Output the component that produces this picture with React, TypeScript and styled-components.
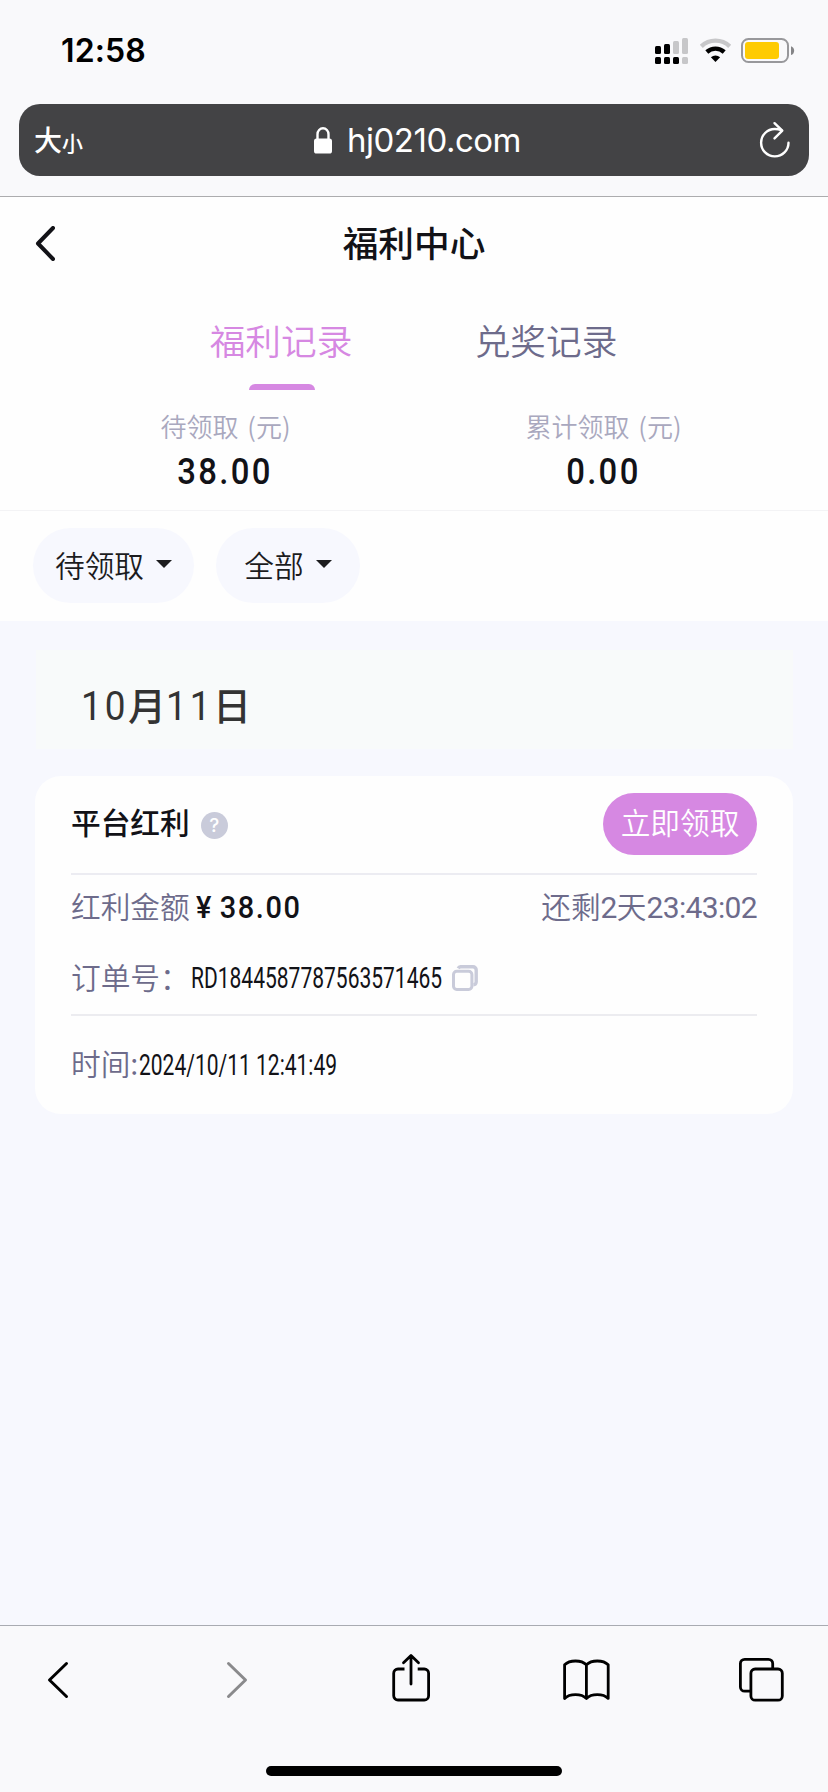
import React from "react";
import styled, { createGlobalStyle } from "styled-components";

const GlobalStyle = createGlobalStyle`
  * { box-sizing: border-box; }
  html, body { margin: 0; padding: 0; background: #f7f8fe; }
  body { font-family: Inter, "Noto Sans CJK SC", sans-serif; }
  button { border: 0; padding: 0; background: none; font: inherit; color: inherit; }
  svg { display: block; flex: none; }
`;

const Screen = styled.div`
  width: 828px;
  height: 1792px;
  display: flex;
  flex-direction: column;
  overflow: hidden;
  background: #f7f8fe;
`;

const BrowserTop = styled.header`
  height: 197px;
  flex: none;
  background: #f9f9fb;
  border-bottom: 1px solid #acacae;
`;

const StatusBar = styled.div`
  height: 104px;
  padding: 0 33px 3px 61px;
  display: flex;
  align-items: center;
  justify-content: space-between;
`;

const Clock = styled.span`
  font-size: 32px;
  font-weight: 600;
  line-height: 40px;
  letter-spacing: 0.1px;
  color: #000;
`;

const AddressBar = styled.div`
  height: 72px;
  margin: 0 19px;
  padding: 0 19px 0 15px;
  display: grid;
  grid-template-columns: 60px 1fr 60px;
  align-items: center;
  border-radius: 21px;
  background: #434345;
  color: #fff;
`;

const TextSize = styled.div`
  display: flex;
  align-items: baseline;
  padding-top: 1px;
  font-family: "Noto Sans CJK SC", sans-serif;
  font-weight: 500;
  font-size: 28px;
  line-height: 40px;
  small { font-size: 21px; }
`;

const Host = styled.div`
  display: flex;
  align-items: center;
  justify-content: center;
  gap: 15px;
  padding-left: 11px;
  font-size: 33px;
  line-height: 40px;
  letter-spacing: -0.5px;
`;

const ReloadSlot = styled.div`
  display: flex;
  justify-content: flex-end;
`;

const Panel = styled.section`
  flex: none;
  height: 424px;
  background: #fefefe;
`;

const NavBar = styled.div`
  height: 93px;
  padding: 0 35px;
  display: grid;
  grid-template-columns: 60px 1fr 60px;
  align-items: center;
`;

const Title = styled.h1`
  margin: 0;
  padding-bottom: 4px;
  text-align: center;
  font-family: "Noto Sans CJK SC", sans-serif;
  font-weight: 500;
  font-size: 35.7px;
  line-height: 52px;
  color: #121217;
`;

const Tabs = styled.nav`
  height: 100px;
  display: flex;
  gap: 121px;
  padding-left: 209px;
`;

const Tab = styled.button<{ $active?: boolean }>`
  width: 144px;
  height: 100px;
  padding-top: 24px;
  display: flex;
  flex-direction: column;
  align-items: center;
  justify-content: space-between;
  font-family: "Noto Sans CJK SC", sans-serif;
  font-size: 35.7px;
  font-weight: 350;
  line-height: 52px;
  color: ${(p) => (p.$active ? "#d688e2" : "#6d6b8b")};
  &::after {
    content: "";
    width: 66px;
    height: 6px;
    margin-left: 2px;
    border-radius: 6px 6px 0 0;
    background: ${(p) => (p.$active ? "#d688e2" : "transparent")};
  }
`;

const Stats = styled.div`
  height: 121px;
  padding: 17px 36px 0;
  display: grid;
  grid-template-columns: 1fr 1fr;
  border-bottom: 1px solid #f3f3f5;
`;

const Stat = styled.div`
  display: flex;
  flex-direction: column;
  align-items: center;
`;

const StatLabel = styled.span`
  font-family: "Noto Sans CJK SC", sans-serif;
  font-weight: 350;
  font-size: 26px;
  line-height: 38px;
  word-spacing: 3px;
  color: #a9a8be;
  padding-left: 1px;
`;

const StatValue = styled.span`
  margin-top: 7px;
  font-family: Roboto, sans-serif;
  font-weight: 500;
  font-size: 36.5px;
  line-height: 40px;
  letter-spacing: 2.6px;
  transform: scaleX(0.9);
  color: #121217;
`;

const Filters = styled.div`
  padding: 17px 33px 0;
  display: flex;
  gap: 22px;
`;

const FilterPill = styled.button<{ $width: number }>`
  width: ${(p) => p.$width}px;
  height: 75px;
  padding-bottom: 1px;
  display: flex;
  align-items: center;
  justify-content: center;
  gap: 12px;
  border-radius: 38px;
  background: #f7f8fe;
  font-family: "Noto Sans CJK SC", sans-serif;
  font-weight: 350;
  font-size: 29.7px;
  line-height: 44px;
  color: #1c1c1e;
  svg { margin-bottom: 2px; }
`;

const Records = styled.main`
  flex: 1;
  padding: 29px 35px 0;
`;

const DateBand = styled.h2`
  margin: 0 0 27px 1px;
  height: 99px;
  padding: 26px 0 0 45px;
  display: flex;
  align-items: baseline;
  background: #f8fafa;
  font-weight: 500;
  font-family: "Noto Sans CJK SC", sans-serif;
  font-size: 38px;
  line-height: 56px;
  color: #333;
`;

const DateNumber = styled.span`
  width: 47px;
  font-family: Roboto, sans-serif;
  font-weight: 400;
  font-size: 41px;
  letter-spacing: 3.4px;
  transform: scaleX(0.9);
  transform-origin: left;
`;

const Card = styled.article`
  height: 338px;
  padding: 0 36px;
  border-radius: 26px;
  background: #fefefe;
  font-family: "Noto Sans CJK SC", sans-serif;
  font-size: 29.7px;
  line-height: 44px;
  color: #6d6b8b;
  font-weight: 350;
`;

const CardHead = styled.div`
  height: 99px;
  padding-top: 17px;
  display: flex;
  align-items: flex-start;
  border-bottom: 2px solid #ececf2;
`;

const CardTitle = styled.h3`
  margin: 7px 11px 0 0;
  font-weight: 500;
  font-size: 29.7px;
  color: #121217;
`;

const HelpMark = styled.span`
  width: 27px;
  height: 27px;
  margin-top: 19px;
  border-radius: 50%;
  display: flex;
  align-items: center;
  justify-content: center;
  background: #c9cbda;
  color: #fff;
  font-family: Inter, sans-serif;
  font-weight: 500;
  font-size: 19px;
  line-height: 27px;
`;

const ClaimButton = styled.button`
  width: 154px;
  height: 62px;
  margin-left: auto;
  padding-bottom: 4px;
  border-radius: 31px;
  background: #d688e2;
  color: #fff;
`;

const Row = styled.div<{ $height: number; $line?: boolean }>`
  height: ${(p) => p.$height}px;
  display: flex;
  align-items: center;
  border-bottom: ${(p) => (p.$line ? "2px solid #ececf0" : "0")};
`;

const OrderRow = styled(Row)`
  padding-top: 2px;
`;

const Label = styled.span`
  padding-bottom: 2px;
`;

const Amount = styled.span`
  margin-left: 6px;
  padding-top: 1px;
  font-family: Roboto, sans-serif;
  font-weight: 500;
  font-size: 30.5px;
  letter-spacing: 1.7px;
  color: #121217;
  transform: scaleX(0.95);
  transform-origin: left;
  i { font-style: normal; margin-right: 7px; }
`;

const Remaining = styled.span`
  margin-left: auto;
  padding-bottom: 1px;
  white-space: nowrap;
`;

const Digits = styled.span`
  font-family: Roboto, sans-serif;
  font-weight: 400;
  font-size: 30px;
  letter-spacing: -0.65px;
`;

const Condensed = styled.span<{ $width: number }>`
  width: ${(p) => p.$width}px;
  padding: 1px 0 0 1px;
  white-space: nowrap;
  font-family: Roboto, sans-serif;
  font-weight: 400;
  font-size: 29.6px;
  color: #121217;
  span { display: inline-block; transform: scaleX(0.71); transform-origin: left; }
`;

const Toolbar = styled.footer`
  flex: none;
  height: 167px;
  display: flex;
  flex-direction: column;
  align-items: center;
  background: #f9f9fb;
  border-top: 1px solid #a9abb2;
`;

const Tools = styled.div`
  width: 100%;
  height: 140px;
  padding-top: 24px;
  display: flex;
  align-items: flex-start;
`;

const Tool = styled.button<{ $before: number }>`
  margin-left: ${(p) => p.$before}px;
`;

const HomeIndicator = styled.div`
  width: 296px;
  height: 10px;
  border-radius: 5px;
  background: #000;
`;

const StatusIcons = () => (
  <svg width="140" height="28" viewBox="0 0 140 28">
    <g>
      <rect x="0" y="9" width="6" height="8" rx="1.5" />
      <rect x="9" y="7" width="6" height="10" rx="1.5" />
      <rect x="18" y="4" width="6" height="13" rx="1.5" fill="#c7c7c9" />
      <rect x="27" y="1" width="6" height="16" rx="1.5" fill="#c7c7c9" />
      <rect x="0" y="20" width="6" height="7" rx="1.5" />
      <rect x="9" y="20" width="6" height="7" rx="1.5" />
      <rect x="18" y="20" width="6" height="7" rx="1.5" />
      <rect x="27" y="20" width="6" height="7" rx="1.5" fill="#c7c7c9" />
    </g>
    <path d="M46.3 9.3a20.7 20.7 0 0 1 28.4 0" fill="none" stroke="#c7c7c9" strokeWidth="4.4" />
    <path d="M51.8 15a13 13 0 0 1 17.4 0" fill="none" stroke="#000" strokeWidth="4.4" />
    <path d="M60.5 25l-4.6-4.7a7 7 0 0 1 9.2 0z" />
    <rect x="87" y="2" width="46" height="23" rx="6.5" fill="none" stroke="#98989b" strokeWidth="2" />
    <rect x="90" y="5" width="34" height="17" rx="3" fill="#fecb02" />
    <path d="M136 9.3c4.2 1.3 4.2 7.4 0 8.7z" fill="#858587" />
  </svg>
);

const LockIcon = () => (
  <svg width="18" height="27" viewBox="0 0 18 27">
    <rect x="0" y="11.5" width="18" height="15" rx="2.6" fill="#fff" />
    <path d="M3.5 13V7.2a5.5 5.9 0 0 1 11 0V13" fill="none" stroke="#fff" strokeWidth="2.4" />
  </svg>
);

const ReloadIcon = () => (
  <svg width="31" height="38" viewBox="0 0 31 38" fill="none" stroke="#fff" strokeWidth="2.4" strokeLinecap="round" strokeLinejoin="round">
    <path d="M29.5 21.7A13.7 13.7 0 1 1 15.8 8c2.4 0 4.5.4 6.5 1.2" />
    <path d="M15.5 2.2l7.8 7.4-7.8 7.8" />
  </svg>
);

const BackChevron = () => (
  <svg width="20" height="35" viewBox="0 0 20 35" fill="none" stroke="#121217" strokeWidth="4" strokeLinecap="round" strokeLinejoin="round">
    <path d="M18 2L3 17.5L18 33" />
  </svg>
);

const Caret = () => (
  <svg width="16" height="8" viewBox="0 0 16 8">
    <path d="M0 0h16L8 8z" fill="#1c1c1e" />
  </svg>
);

const CopyIcon = () => (
  <svg width="26" height="26" viewBox="0 0 26 26" fill="none" stroke="#c9cbda" strokeWidth="3">
    <path d="M6.2 3.4A3 3 0 0 1 8.6 1.8H21a3.2 3.2 0 0 1 3.2 3.2V17a3 3 0 0 1-2.8 2.8" strokeWidth="3.4" />
    <rect x="1.5" y="6.3" width="18.4" height="18.2" rx="3.2" />
  </svg>
);

const toolStroke = { fill: "none", stroke: "#000", strokeWidth: 2.8, strokeLinecap: "round", strokeLinejoin: "round" } as const;

const ShareIcon = () => (
  <svg width="38" height="52" viewBox="0 0 38 52" {...toolStroke}>
    <path d="M12.5 19H6a4.3 4.3 0 0 0-4.3 4.3v22.4A4.3 4.3 0 0 0 6 50h26.3a4.3 4.3 0 0 0 4.3-4.3V23.3a4.3 4.3 0 0 0-4.3-4.3h-6.6" strokeLinecap="butt" />
    <path d="M19 34V5.8M11.5 12.8L19 5.5l7.5 7.3" />
  </svg>
);

const BookIcon = () => (
  <svg width="47" height="52" viewBox="0 0 47 52" {...toolStroke}>
    <path d="M23.4 14.8v33.6M1.6 14.8c5-5.1 16.8-5.1 21.8 0c5-5.1 16.8-5.1 21.8 0v33.6c-5-5.1-16.8-5.1-21.8 0c-5-5.1-16.8-5.1-21.8 0z" />
  </svg>
);

const WindowsIcon = () => (
  <svg width="46" height="52" viewBox="0 0 46 52" {...toolStroke}>
    <path d="M12 41.2H6.7a4.3 4.3 0 0 1-4.3-4.3V13.6a4.3 4.3 0 0 1 4.3-4.3h23.7a4.3 4.3 0 0 1 4.3 4.3v4.8" />
    <rect x="12.9" y="19" width="31.4" height="31.2" rx="4.3" />
  </svg>
);

export default function App() {
  return (
    <>
      <GlobalStyle />
      <Screen>
        <BrowserTop>
          <StatusBar>
            <Clock>12:58</Clock>
            <StatusIcons />
          </StatusBar>
          <AddressBar>
            <TextSize>大<small>小</small></TextSize>
            <Host><LockIcon />hj0210.com</Host>
            <ReloadSlot><ReloadIcon /></ReloadSlot>
          </AddressBar>
        </BrowserTop>
        <Panel>
          <NavBar>
            <BackChevron />
            <Title>福利中心</Title>
          </NavBar>
          <Tabs>
            <Tab $active>福利记录</Tab>
            <Tab>兑奖记录</Tab>
          </Tabs>
          <Stats>
            <Stat>
              <StatLabel>待领取 (元)</StatLabel>
              <StatValue>38.00</StatValue>
            </Stat>
            <Stat>
              <StatLabel>累计领取 (元)</StatLabel>
              <StatValue>0.00</StatValue>
            </Stat>
          </Stats>
          <Filters>
            <FilterPill $width={161}>待领取<Caret /></FilterPill>
            <FilterPill $width={144}>全部<Caret /></FilterPill>
          </Filters>
        </Panel>
        <Records>
          <DateBand>
            <DateNumber>10</DateNumber>月<DateNumber>11</DateNumber>日
          </DateBand>
          <Card>
            <CardHead>
              <CardTitle>平台红利</CardTitle>
              <HelpMark>?</HelpMark>
              <ClaimButton>立即领取</ClaimButton>
            </CardHead>
            <Row $height={64}>
              <Label>红利金额</Label>
              <Amount><i>¥</i>38.00</Amount>
              <Remaining>还剩<Digits>2</Digits>天<Digits>23:43:02</Digits></Remaining>
            </Row>
            <OrderRow $height={77} $line>
              <Label>订单号：</Label>
              <Condensed $width={262}><span>RD1844587787563571465</span></Condensed>
              <CopyIcon />
            </OrderRow>
            <Row $height={96}>
              <Label>时间:</Label>
              <Condensed $width={200}><span>2024/10/11 12:41:49</span></Condensed>
            </Row>
          </Card>
        </Records>
        <Toolbar>
          <Tools>
            <Tool $before={46}>
              <svg width="24" height="52" viewBox="0 0 24 52" {...toolStroke} strokeWidth={3}>
                <path d="M20.5 13.5L3.5 30l17 16.5" />
              </svg>
            </Tool>
            <Tool $before={155}>
              <svg width="24" height="52" viewBox="0 0 24 52" {...toolStroke} stroke="#8a8a8c" strokeWidth={3}>
                <path d="M3.5 13.5L20.5 30l-17 16.5" />
              </svg>
            </Tool>
            <Tool $before={143}><ShareIcon /></Tool>
            <Tool $before={133}><BookIcon /></Tool>
            <Tool $before={128}><WindowsIcon /></Tool>
          </Tools>
          <HomeIndicator />
        </Toolbar>
      </Screen>
    </>
  );
}
